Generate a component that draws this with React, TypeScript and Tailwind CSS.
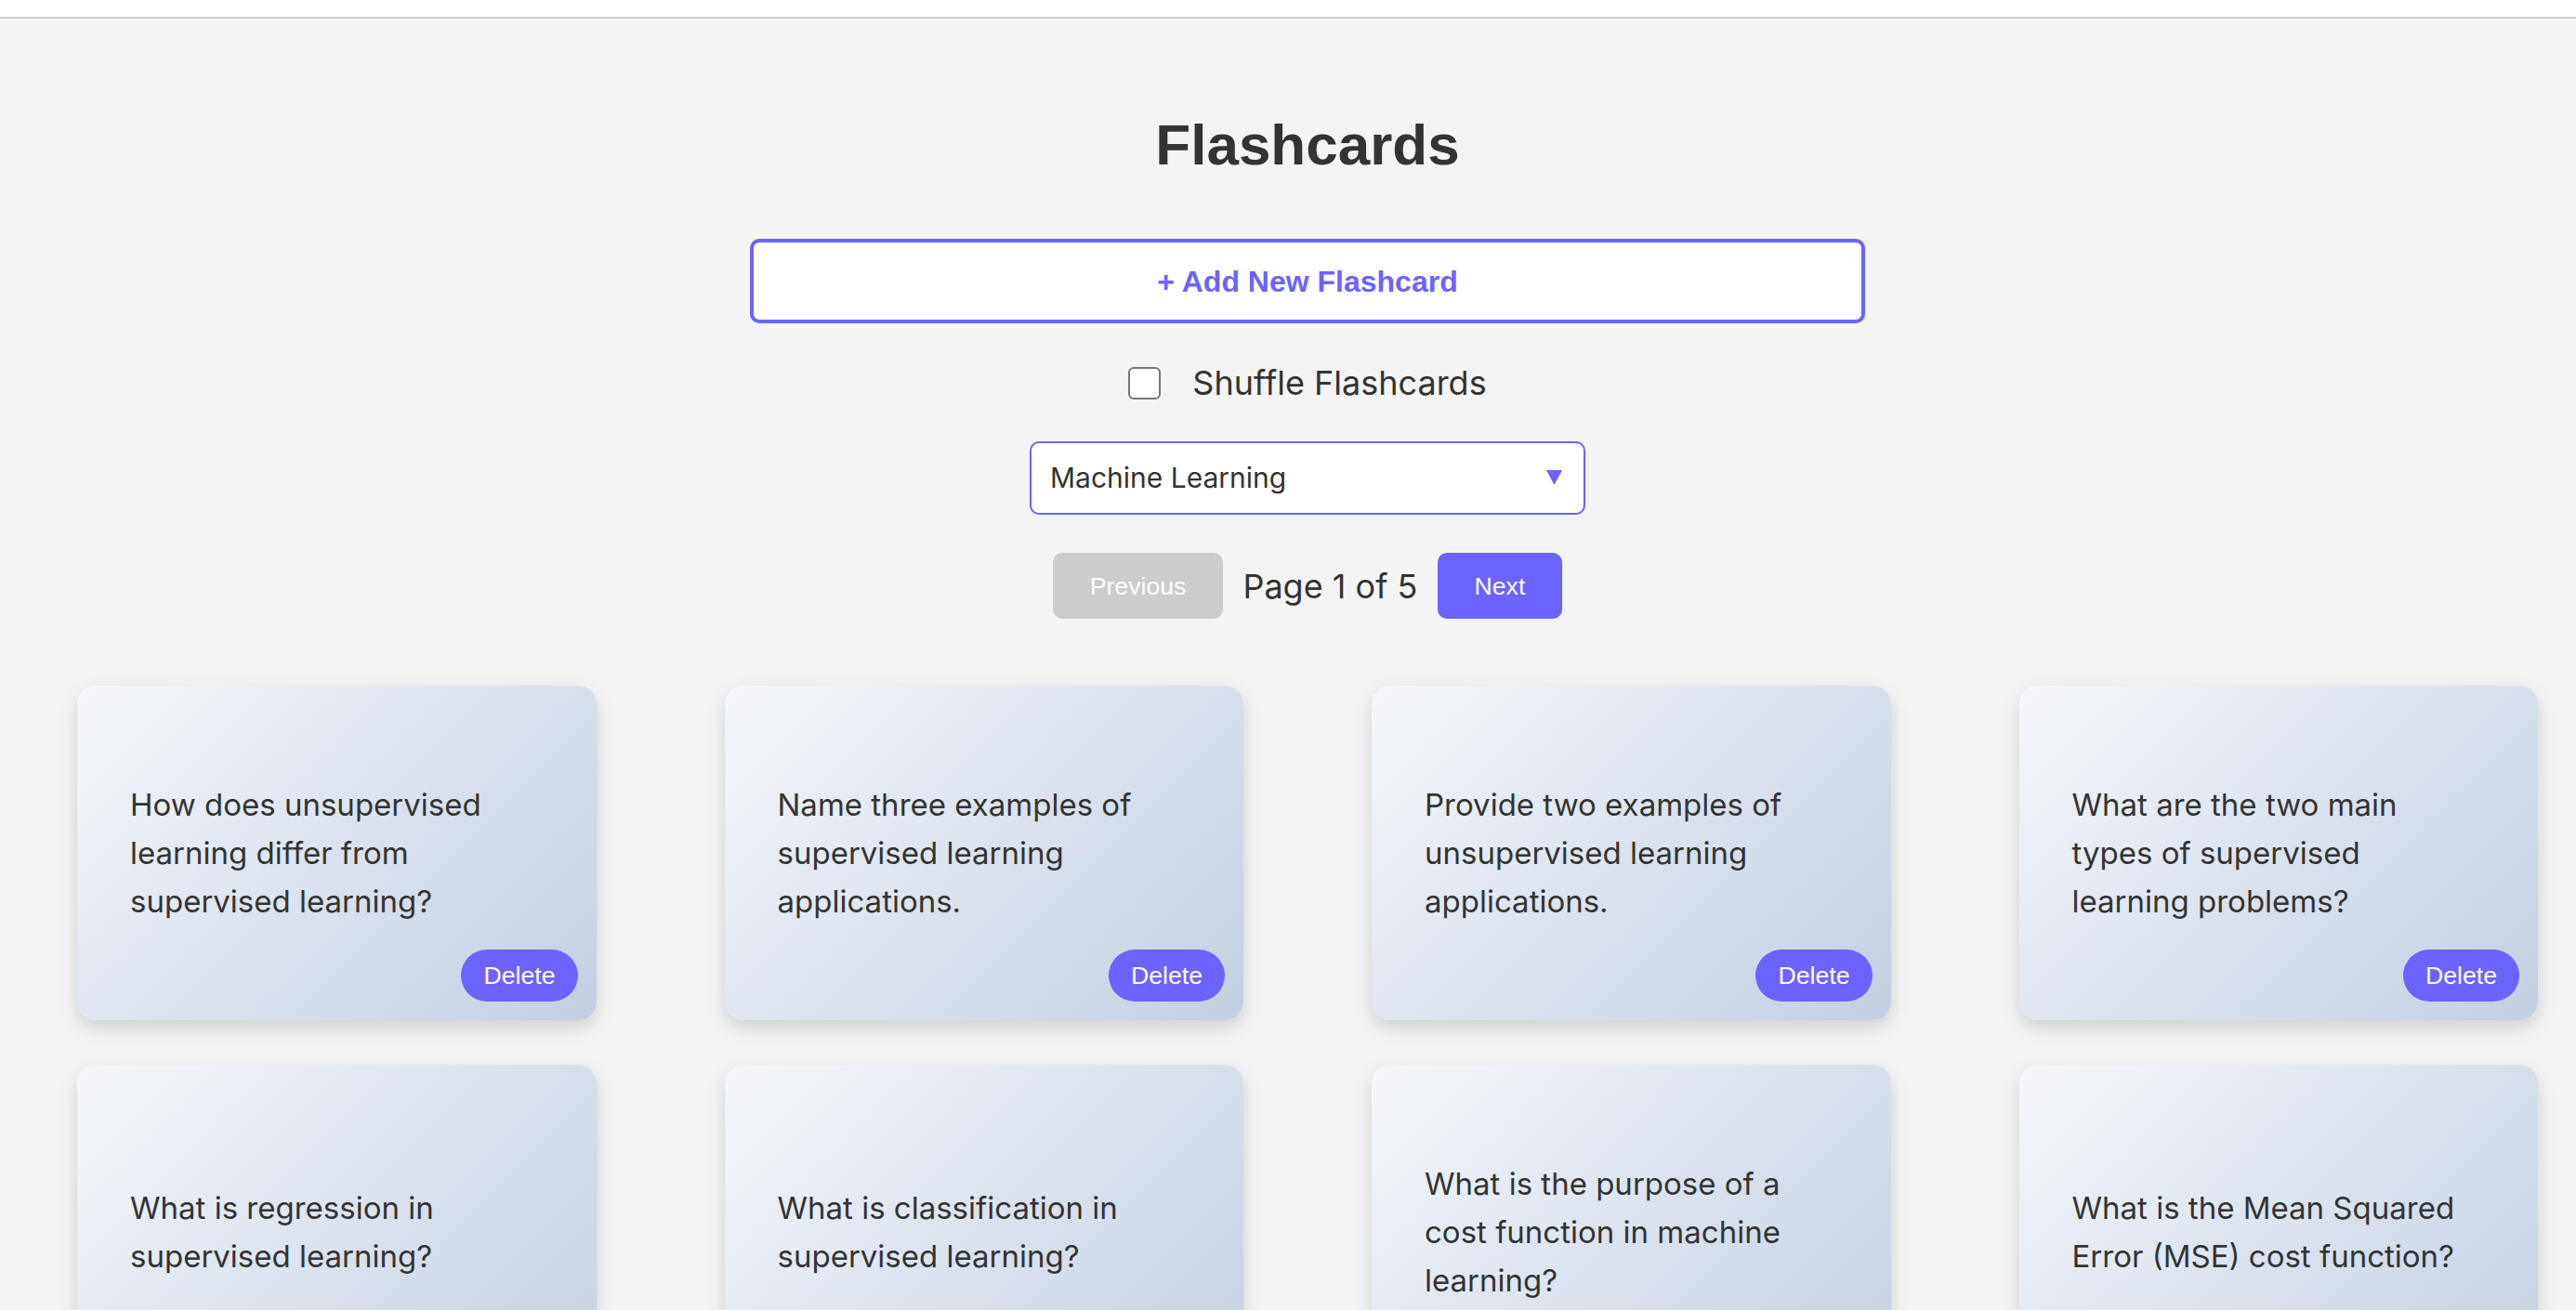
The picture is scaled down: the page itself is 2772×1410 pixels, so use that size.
const cards = [
  "How does unsupervised learning differ from supervised learning?",
  "Name three examples of supervised learning applications.",
  "Provide two examples of unsupervised learning applications.",
  "What are the two main types of supervised learning problems?",
  "What is regression in supervised learning?",
  "What is classification in supervised learning?",
  "What is the purpose of a cost function in machine learning?",
  "What is the Mean Squared Error (MSE) cost function?",
]

function Flashcard({ question }: { question: string }) {
  return (
    <div className="relative h-[360px] rounded-[20px] bg-[linear-gradient(135deg,#f5f7fa_0%,#c3cfe2_100%)] shadow-[0_8px_20px_rgba(0,0,0,0.15)] flex items-center pl-[57px] pr-[60px]">
      <p className="font-['Inter',sans-serif] text-[33px] leading-[52px] text-[#333]">{question}</p>
      <button className="absolute right-[20px] bottom-[20px] h-[56px] px-[24px] rounded-full bg-[#6c63ff] text-white text-[26.67px]">
        Delete
      </button>
    </div>
  )
}

export default function App() {
  return (
    <div className="min-h-screen bg-[#f4f4f4] font-['Liberation_Sans',Arial,sans-serif] text-[#333]">
      {/* top strip */}
      <div className="h-[20px] bg-white border-b-2 border-[#ccc]" />

      <main className="pl-[42px] pt-[105px] pb-[80px] flex flex-col items-center">
        <h1 className="text-[62px] font-bold leading-none">Flashcards</h1>

        <button className="mt-[70px] w-[1200px] h-[91px] bg-white border-4 border-[#6c63ff] rounded-[10px] text-[32px] font-bold text-[#6c63ff]">
          + Add New Flashcard
        </button>

        <label className="mt-[42px] h-[44px] flex items-center gap-[34px]">
          <input
            type="checkbox"
            className="appearance-none w-[35px] h-[35px] rounded-[6px] border-2 border-[#767676] bg-white"
          />
          <span className="font-['Inter',sans-serif] text-[36px]">Shuffle Flashcards</span>
        </label>

        {/* category select */}
        <div className="mt-[41px] relative w-[598px] h-[79px]">
          <select className="appearance-none w-full h-full bg-white border-2 border-[#6c63ff] rounded-[10px] pl-[20px] font-['Inter',sans-serif] text-[30px] text-[#333] outline-none">
            <option>Machine Learning</option>
          </select>
          <svg
            className="absolute right-[25px] top-[31px] pointer-events-none"
            width="17"
            height="16"
            viewBox="0 0 17 16"
          >
            <polygon points="0,0 17,0 8.5,16" fill="#6c63ff" />
          </svg>
        </div>

        {/* pagination */}
        <div className="mt-[41px] flex items-center">
          <button className="h-[71px] px-[40px] rounded-[10px] bg-[#ccc] text-white text-[26.67px]" disabled>
            Previous
          </button>
          <span className="mx-[21px] font-['Inter',sans-serif] text-[36px]">Page 1 of 5</span>
          <button className="h-[71px] px-[40px] rounded-[10px] bg-[#6c63ff] text-white text-[26.67px]">
            Next
          </button>
        </div>

        <div className="mt-[72px] w-full px-[41px] grid grid-cols-4 gap-x-[138px] gap-y-[48px]">
          {cards.map((q) => (
            <Flashcard key={q} question={q} />
          ))}
        </div>
      </main>
    </div>
  )
}
